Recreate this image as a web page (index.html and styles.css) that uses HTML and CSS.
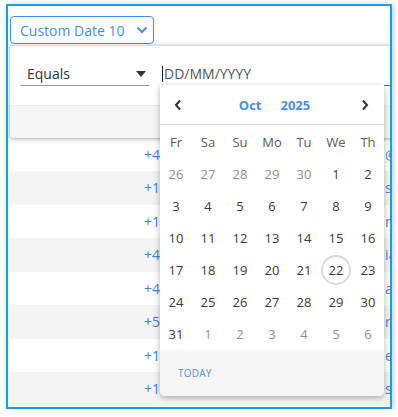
FILE: index.html
```html
<!DOCTYPE html>
<html lang="en">
<head>
  <meta charset="UTF-8" />
  <title>Custom Date filter</title>
  <link rel="stylesheet" href="styles.css">
</head>
<body>

<div class="frame">
  <div class="toolbar">
    <button class="filter-btn" type="button">
      Custom Date 10
      <svg width="12" height="8" viewBox="0 0 12 8"><polyline points="1.5,1.5 6,6 10.5,1.5" fill="none" stroke="#4a8ee0" stroke-width="2"/></svg>
    </button>
  </div>

  <div class="rows">
    <div class="row head"><span></span><span></span><span></span></div>
    <div class="row"><span></span><span>+1 202 555 0147</span><span>@mail.com</span></div>
    <div class="row"><span></span><span>+44 20 7946 0958</span><span>@mail.com</span></div>
    <div class="row"><span></span><span>+1 415 555 0132</span><span>steve@mail.com</span></div>
    <div class="row"><span></span><span>+1 312 555 0199</span><span>nina@mail.com</span></div>
    <div class="row"><span></span><span>+44 161 496 0311</span><span>iain@mail.com</span></div>
    <div class="row"><span></span><span>+44 117 496 0725</span><span>april@mail.com</span></div>
    <div class="row"><span></span><span>+55 11 5555 0123</span><span>n.silva@mail.com</span></div>
    <div class="row"><span></span><span>+1 646 555 0183</span><span>eeva@mail.com</span></div>
    <div class="row"><span></span><span>+1 718 555 0110</span><span>sam@mail.com</span></div>
  </div>

  <!-- filter panel -->
  <div class="panel">
    <div class="panel-top">
      <div class="select">
        <span>Equals</span>
        <svg width="10" height="6" viewBox="0 0 10 6"><polygon points="0,0 10,0 5,6" fill="#333"/></svg>
      </div>
      <div class="date-input"><span class="caret"></span>DD/MM/YYYY</div>
    </div>
    <div class="panel-bottom"></div>
  </div>

  <!-- date picker -->
  <div class="calendar">
    <div class="cal-head">
      <svg width="8" height="12" viewBox="0 0 8 12"><polyline points="6,1.5 2,6 6,10.5" fill="none" stroke="#333" stroke-width="2"/></svg>
      <div class="cal-title"><span>Oct</span><span>2025</span></div>
      <svg width="8" height="12" viewBox="0 0 8 12"><polyline points="2,1.5 6,6 2,10.5" fill="none" stroke="#333" stroke-width="2"/></svg>
    </div>
    <div class="cal-grid" id="calGrid"></div>
    <div class="cal-foot">TODAY</div>
  </div>
</div>

<script>
const grid = document.getElementById('calGrid');
const names = ['Fr', 'Sa', 'Su', 'Mo', 'Tu', 'We', 'Th'];
const days = [
  [26, 0], [27, 0], [28, 0], [29, 0], [30, 0]
];
for (let d = 1; d <= 31; d++) days.push([d, 1]);
for (let d = 1; d <= 6; d++) days.push([d, 0]);

let html = names.map(n => `<div class="wd">${n}</div>`).join('');
days.forEach(([d, cur]) => {
  let cls = 'day';
  if (!cur) cls += ' other';
  if (cur && d === 22) cls += ' today';
  html += `<div class="${cls}"><span>${d}</span></div>`;
});
grid.innerHTML = html;
</script>

</body>
</html>
```

FILE: styles.css
```css
* {
  box-sizing: border-box;
}
html, body {
  margin: 0;
  padding: 0;
  background: #fff;
  font-family: 'Open Sans', 'DejaVu Sans', sans-serif;
}
.frame {
  position: relative;
  margin: 4px 0 0 6px;
  width: 386px;
  height: 405px;
  border: 2px solid #1b9be3;
  box-shadow: 1px 1px 6px rgba(0,0,0,0.25);
  overflow: hidden;
  background: #fff;
}
.toolbar {
  height: 39px;
  padding: 10px 0 0 2px;
}
.filter-btn {
  display: flex;
  align-items: center;
  gap: 11px;
  height: 28px;
  width: 144px;
  padding: 0 0 0 9px;
  border: 1px solid #4a8ee0;
  border-radius: 4px;
  background: #fff;
  color: #4a8ee0;
  font-family: inherit;
  font-size: 14px;
}
.rows {
  display: flex;
  flex-direction: column;
}
.row {
  display: grid;
  grid-template-columns: 136px 241px 200px;
  align-items: center;
  height: 33.5px;
  color: #3f86dc;
  font-size: 14px;
  white-space: nowrap;
}
.row:nth-child(even) {
  background: #f3f3f3;
}
.row.head {
  height: 59px;
  background: #fff;
}
.panel {
  position: absolute;
  left: 2px;
  top: 39px;
  right: -4px;
  height: 93px;
  background: #fff;
  border-top: 1px solid #dcdcdc;
  border-radius: 0 0 4px 4px;
  box-shadow: 0 1px 4px rgba(0,0,0,0.35);
  display: flex;
  flex-direction: column;
}
.panel-top {
  height: 59px;
  display: flex;
  align-items: flex-end;
  gap: 10px;
  padding: 0 0 19px 10px;
}
.select {
  width: 130px;
  height: 24px;
  display: flex;
  align-items: center;
  justify-content: space-between;
  padding: 0 4px 0 7px;
  border-bottom: 1px solid #9a9a9a;
  color: #333;
  font-size: 14px;
}
.date-input {
  flex: 1;
  height: 24px;
  display: flex;
  align-items: center;
  padding-left: 2px;
  border-bottom: 1px solid #2f7fdd;
  color: #555;
  font-size: 14px;
}
.caret {
  display: inline-block;
  width: 1px;
  height: 16px;
  background: #222;
  margin-right: 1px;
}
.panel-bottom {
  flex: 1;
  background: #f5f5f5;
  border-top: 1px solid #eaeaea;
  border-radius: 0 0 4px 4px;
}
.calendar {
  position: absolute;
  left: 152px;
  top: 79px;
  width: 224px;
  height: 311px;
  background: #fff;
  border-radius: 0 0 5px 5px;
  box-shadow: 0 2px 6px rgba(0,0,0,0.3);
  display: flex;
  flex-direction: column;
  overflow: hidden;
}
.cal-head {
  height: 40px;
  display: flex;
  align-items: center;
  justify-content: space-between;
  padding: 0 15px 0 14px;
  border-bottom: 1px solid #dedede;
}
.cal-title {
  display: flex;
  gap: 19px;
  margin-left: 6px;
  color: #4a8ee0;
  font-weight: 700;
  font-size: 13px;
}
.cal-grid {
  display: grid;
  grid-template-columns: repeat(7, 32px);
  grid-auto-rows: 32px;
  padding-top: 1px;
}
.wd, .day {
  display: flex;
  align-items: center;
  justify-content: center;
  font-size: 13px;
}
.wd {
  color: #5a5a5a;
}
.day {
  color: #3a3a3a;
}
.day.other {
  color: #8e8e8e;
}
.day.today span {
  display: flex;
  align-items: center;
  justify-content: center;
  width: 30px;
  height: 30px;
  border: 2px solid #d8d8d8;
  border-radius: 50%;
}
.cal-foot {
  flex: 1;
  background: #f5f5f5;
  color: #5b8fd9;
  font-size: 10px;
  letter-spacing: 0.2px;
  display: flex;
  align-items: center;
  padding-left: 18px;
}
```
